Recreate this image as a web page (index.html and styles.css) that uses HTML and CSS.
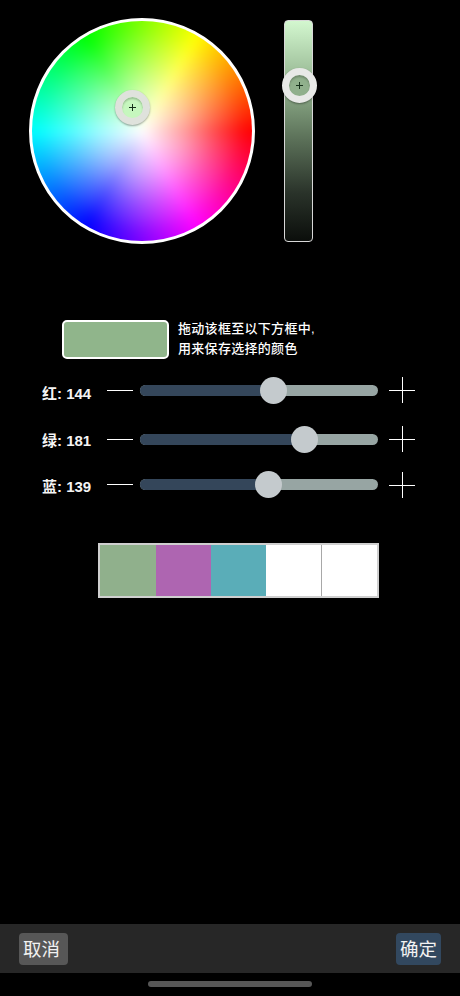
FILE: index.html
```html
<!DOCTYPE html>
<html lang="zh-CN">
<head>
<meta charset="utf-8">
<title>选择颜色</title>
<link rel="stylesheet" href="styles.css">
</head>
<body>
<div class="screen">
  <section class="picker">
    <div class="wheel">
      <div class="wheel-colors"></div>
      <div class="thumb thumb-wheel"><span class="cross"></span></div>
    </div>
    <div class="value-bar">
      <div class="thumb thumb-bar"><span class="cross"></span></div>
    </div>
  </section>

  <section class="current">
    <div class="current-swatch"></div>
    <p class="hint">拖动该框至以下方框中,<br>用来保存选择的颜色</p>
  </section>

  <section class="sliders">
    <div class="slider-row row-r">
      <span class="label">红: 144</span>
      <span class="minus"></span>
      <div class="track"><div class="fill fill-r"></div><div class="knob"></div></div>
      <span class="plus"></span>
    </div>
    <div class="slider-row row-g">
      <span class="label">绿: 181</span>
      <span class="minus"></span>
      <div class="track"><div class="fill fill-g"></div><div class="knob"></div></div>
      <span class="plus"></span>
    </div>
    <div class="slider-row row-b">
      <span class="label">蓝: 139</span>
      <span class="minus"></span>
      <div class="track"><div class="fill fill-b"></div><div class="knob"></div></div>
      <span class="plus"></span>
    </div>
  </section>

  <section class="palette">
    <div class="cell c1"></div>
    <div class="cell c2"></div>
    <div class="cell c3"></div>
    <div class="cell c4"></div>
    <div class="cell c5"></div>
  </section>

  <footer class="toolbar">
    <button class="btn btn-cancel">取消</button>
    <button class="btn btn-ok">确定</button>
  </footer>
  <div class="home"><span class="home-bar"></span></div>
</div>
</body>
</html>
```
FILE: styles.css
```css
* { box-sizing: border-box; }
html, body { margin: 0; padding: 0; background: #000; }
body { font-family: "Liberation Sans", "Noto Sans CJK SC", sans-serif; color: #fff; }

.screen {
  width: 460px;
  height: 996px;
  display: flex;
  flex-direction: column;
  overflow: hidden;
}

/* picker */
.picker {
  display: flex;
  align-items: flex-start;
  padding: 18px 0 0 29px;
  gap: 29px;
  height: 320px;
  flex: none;
}
.wheel {
  position: relative;
  width: 226px;
  height: 226px;
  border-radius: 50%;
  border: 3px solid #fff;
  overflow: hidden;
  background: #fff;
}
.wheel-colors {
  position: absolute;
  inset: -12px;
  filter: blur(5px);
  background:
    radial-gradient(circle 110px, #fff 0%, rgba(255,255,255,.82) 18%, rgba(255,255,255,.6) 40%, rgba(255,255,255,.3) 66%, rgba(255,255,255,.06) 90%, rgba(255,255,255,0) 100%),
    conic-gradient(from 90deg, #f00, #f0f, #00f, #0ff, #0f0, #ff0, #f00);
}
.value-bar {
  position: relative;
  width: 29px;
  height: 222px;
  margin-top: 2px;
  border-radius: 4px;
  border: 1px solid #d8d8d8;
  background: linear-gradient(#d3f7cf 0%, #90b08c 30%, #5f755c 52%, #2a332a 78%, #0b0e0b 100%);
}
.thumb {
  position: absolute;
  width: 35px;
  height: 35px;
  border-radius: 50%;
  border: 7px solid #e4e6e2;
  box-shadow: 0 1px 2px rgba(0,0,0,.35), inset 0 2px 2px rgba(0,0,0,.22);
  display: flex;
  align-items: center;
  justify-content: center;
}
.thumb-wheel { left: 83px; top: 69px; background: #c6f7be; border-color: #dfe2dc; }
.thumb-bar { left: -3px; top: 47px; background: #90b08c; border-color: #e8e9e7; }
.cross { position: relative; width: 7px; height: 7px; }
.cross::before, .cross::after { content: ""; position: absolute; background: #16301a; }
.cross::before { left: 0; right: 0; top: 3px; height: 1px; }
.cross::after { top: 0; bottom: 0; left: 3px; width: 1px; }

/* current colour */
.current {
  display: flex;
  align-items: center;
  padding-left: 62px;
  gap: 9px;
  height: 39px;
  flex: none;
}
.current-swatch {
  width: 107px;
  height: 39px;
  border: 2px solid #fff;
  border-radius: 5px;
  background: #90b58b;
}
.hint {
  margin: -2px 0 0;
  font-size: 13px;
  line-height: 20px;
  font-weight: 500;
  letter-spacing: .3px;
}

/* sliders */
.sliders { display: flex; flex-direction: column; height: 184px; flex: none; padding-top: 17.7px; }
.slider-row {
  display: flex;
  align-items: center;
  height: 27px;
  padding-left: 42px;
}
.row-r { margin-bottom: 22px; }
.row-g { margin-bottom: 18.5px; }
.label { width: 65px; font-size: 15px; font-weight: 700; color: #f4f4f4; white-space: nowrap; position: relative; top: 2px; }
.row-g .label { top: 0; }
.row-b .label { top: 1px; }
.minus { width: 26px; height: 1px; background: #fff; flex: none; }
.track {
  position: relative;
  width: 238px;
  height: 11px;
  margin: 0 11px 0 7px;
  border-radius: 6px;
  background: #97a5a3;
  flex: none;
}
.fill { height: 100%; border-radius: 6px 0 0 6px; background: #34465a; }
.fill-r { width: 133px; }
.fill-g { width: 164px; }
.fill-b { width: 128px; }
.knob {
  position: absolute;
  top: -8px;
  width: 27px;
  height: 27px;
  border-radius: 50%;
  background: #c4cacd;
}
.row-r .knob { left: 120px; }
.row-g .knob { left: 151px; }
.row-b .knob { left: 115px; }
.plus { position: relative; width: 26px; height: 26px; flex: none; }
.plus::before, .plus::after { content: ""; position: absolute; background: #fff; }
.plus::before { left: 0; right: 0; top: 13px; height: 1px; }
.plus::after { top: 0; bottom: 0; left: 13px; width: 1px; }

/* palette */
.palette {
  display: flex;
  width: 281px;
  height: 55px;
  margin: 0 0 0 98px;
  border: 2px solid #cfcfcf;
  background: #a8a8a8;
  flex: none;
}
.cell { flex: none; height: 100%; }
.c1 { width: 56px; background: #90b08c; }
.c2 { width: 55px; background: #ae65b1; }
.c3 { width: 55px; background: #5aadb8; }
.c4 { width: 55px; background: #fff; }
.c5 { width: 55px; margin-left: 1px; background: #fff; }

/* toolbar */
.toolbar {
  margin-top: auto;
  height: 49px;
  background: #272727;
  display: flex;
  align-items: center;
  justify-content: space-between;
  padding: 0 19px;
  flex: none;
}
.btn {
  border: 0;
  height: 32px;
  padding: 1px 0 0;
  border-radius: 4px;
  color: #f2f2f2;
  font-family: "Liberation Sans", "Noto Sans CJK SC", sans-serif;
  font-size: 18.5px;
  line-height: 31px;
}
.btn-cancel { width: 49px; padding-right: 4px; background: #575757; }
.btn-ok { width: 45px; background: #32485f; }

.home {
  height: 23px;
  display: flex;
  justify-content: center;
  align-items: flex-start;
  padding-top: 8px;
  flex: none;
}
.home-bar { width: 164px; height: 6px; border-radius: 3px; background: #575757; }
```
